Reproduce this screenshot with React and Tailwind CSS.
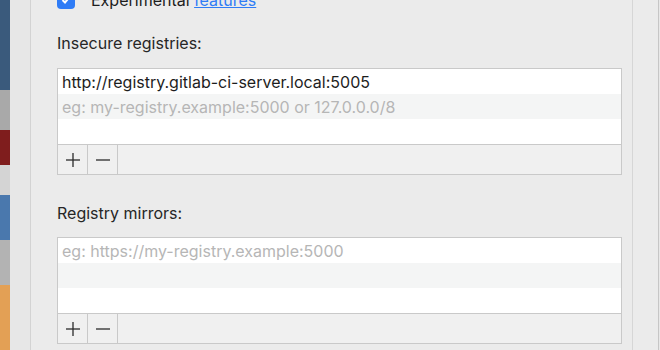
import { useState } from 'react';

const font = { fontFamily: 'Inter, "Liberation Sans", sans-serif' };

function PlusIcon() {
  return (
    <svg width="16" height="16" viewBox="0 0 16 16" fill="none" stroke="#2a2a2a" strokeWidth="1.3">
      <line x1="8" y1="1" x2="8" y2="15" />
      <line x1="1" y1="8" x2="15" y2="8" />
    </svg>
  );
}

function MinusIcon() {
  return (
    <svg width="16" height="16" viewBox="0 0 16 16" fill="none" stroke="#2a2a2a" strokeWidth="1.3">
      <line x1="1" y1="8" x2="15" y2="8" />
    </svg>
  );
}

function RegistryList({ items, placeholder }) {
  const rows = [...items, null, null, null].slice(0, 3);

  return (
    <div className="border border-[#c9c9c9] bg-white">
      <div className="flex flex-col">
        {rows.map((item, index) => (
          <div
            key={index}
            className={`h-[25px] px-[4px] flex items-center text-[16px] leading-none ${
              index % 2 === 1 ? 'bg-[#f4f5f5]' : 'bg-white'
            }`}
          >
            {item && <span className="text-[#1d1d1d]">{item}</span>}
            {!item && index === items.length && (
              <span className="text-[#b6b6b6]">{placeholder}</span>
            )}
          </div>
        ))}
      </div>
      <div className="flex h-[30px] border-t border-[#c9c9c9] bg-[#f0f0f0]">
        <button className="w-[30px] flex items-center justify-center border-r border-[#c9c9c9]">
          <PlusIcon />
        </button>
        <button className="w-[30px] flex items-center justify-center border-r border-[#c9c9c9]">
          <MinusIcon />
        </button>
      </div>
    </div>
  );
}

export default function App() {
  const [insecure] = useState(['http://registry.gitlab-ci-server.local:5005']);
  const [mirrors] = useState([]);

  return (
    <div className="flex w-[660px] h-[350px] overflow-hidden bg-[#ebebeb]" style={font}>
      {/* desktop behind the window */}
      <div className="w-[10px] flex flex-col">
        <div className="h-[90px] bg-[#3a5a7c]" />
        <div className="h-[40px] bg-[#a9a9a9]" />
        <div className="h-[35px] bg-[#7f1d1d]" />
        <div className="h-[30px] bg-[#d4d4d4]" />
        <div className="h-[45px] bg-[#4a78ad]" />
        <div className="h-[45px] bg-[#b3b3b3]" />
        <div className="flex-1 bg-[#e3a055]" />
      </div>
      <div className="w-[21px] bg-[#e7e7e7] border-r border-[#d3d3d3]" />

      <div className="flex-1 pl-[26px] pr-[10px] flex flex-col">
        <div className="-mt-[10px] h-[19px] flex items-center gap-[16px]">
          <div className="w-[18px] h-[18px] rounded-[4px] bg-[#2f7cf6] flex items-center justify-center">
            <svg width="12" height="12" viewBox="0 0 12 12" fill="none" stroke="white" strokeWidth="2">
              <polyline points="2.5 6 5 8.5 9.5 3" />
            </svg>
          </div>
          <span className="text-[16px] text-[#1d1d1d]">
            Experimental <span className="text-[#2f7cf6] underline">features</span>
          </span>
        </div>

        <div className="mt-[24px] text-[16px] leading-[20px] text-[#262626]">Insecure registries:</div>
        <div className="mt-[15px]">
          <RegistryList items={insecure} placeholder="eg: my-registry.example:5000 or 127.0.0.0/8" />
        </div>

        <div className="mt-[28px] text-[16px] leading-[20px] text-[#262626]">Registry mirrors:</div>
        <div className="mt-[14px]">
          <RegistryList items={mirrors} placeholder="eg: https://my-registry.example:5000" />
        </div>
      </div>

      <div className="w-[27px] border-l border-[#d6d6d6] border-r border-r-[#c6c6c6] bg-[#ebebeb]" />
      <div className="w-[1px] bg-[#e8e8e8]" />
    </div>
  );
}
